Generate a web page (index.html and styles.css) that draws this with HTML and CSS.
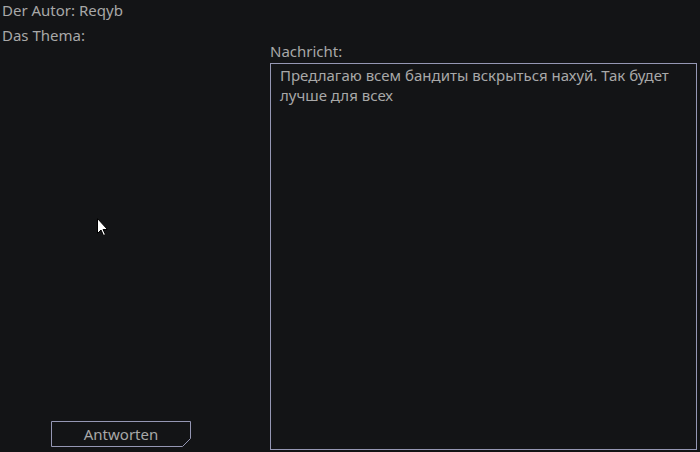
FILE: index.html
```html
<!DOCTYPE html>
<html>
<head>
<meta charset="utf-8">
<link rel="stylesheet" href="styles.css">
</head>
<body>
<div class="page">
  <div class="line author">Der Autor: Reqyb</div>
  <div class="main">
    <div class="left">
      <div class="line">Das Thema:</div>
      <div class="spacer"></div>
      <button class="reply">
        <svg class="reply-frame" width="140" height="26" viewBox="0 0 140 26">
          <path d="M0.5 0.5 H139.5 V17.5 L131.5 25.5 H0.5 Z" fill="none" stroke="#9597b4" stroke-width="1"/>
        </svg>
        <span>Antworten</span>
      </button>
    </div>
    <div class="right">
      <div class="line label">Nachricht:</div>
      <div class="message">Предлагаю всем бандиты вскрыться нахуй. Так будет лучше для всех</div>
    </div>
  </div>
</div>
<svg class="cursor" width="12" height="19" viewBox="0 0 12 19">
  <path d="M0.5 0.5 V15.5 L4 12 L6.5 17.5 L8.5 16.5 L6 11.5 H10.5 Z" fill="#fff" stroke="#000" stroke-width="1"/>
</svg>
</body>
</html>
```
FILE: styles.css
```css
html, body {
  margin: 0;
  padding: 0;
  background: #131416;
}
body {
  width: 700px;
  height: 452px;
  overflow: hidden;
  font-family: "Noto Sans", "DejaVu Sans", sans-serif;
  font-size: 15px;
  color: #a8a8a8;
}
.page {
  display: flex;
  flex-direction: column;
  height: 452px;
}
.line {
  line-height: 20px;
  height: 20px;
}
.author {
  padding: 0 0 0 2px;
}
.main {
  display: flex;
  flex: 1;
  margin-top: 5px;
}
.left {
  width: 271px;
  display: flex;
  flex-direction: column;
  padding-left: 2px;
  box-sizing: border-box;
}
.spacer { flex: 1; }
.reply {
  position: relative;
  margin: 0 0 5px 49px;
  width: 140px;
  height: 26px;
  padding: 0;
  border: none;
  background: transparent;
  font: inherit;
  color: #a8a8a8;
  display: flex;
  align-items: center;
  justify-content: center;
}
.reply-frame {
  position: absolute;
  left: 0;
  top: 0;
}
.reply span { position: relative; }
.right {
  flex: 1;
  display: flex;
  flex-direction: column;
  padding-top: 16px;
  margin-left: -1px;
}
.label {
  padding-left: 0;
}
.message {
  margin-top: 2px;
  width: 427px;
  height: 387px;
  box-sizing: border-box;
  border: 1px solid #9597b4;
  padding: 1px 9px;
  line-height: 20px;
}
.cursor {
  position: absolute;
  left: 97px;
  top: 218px;
}
```
